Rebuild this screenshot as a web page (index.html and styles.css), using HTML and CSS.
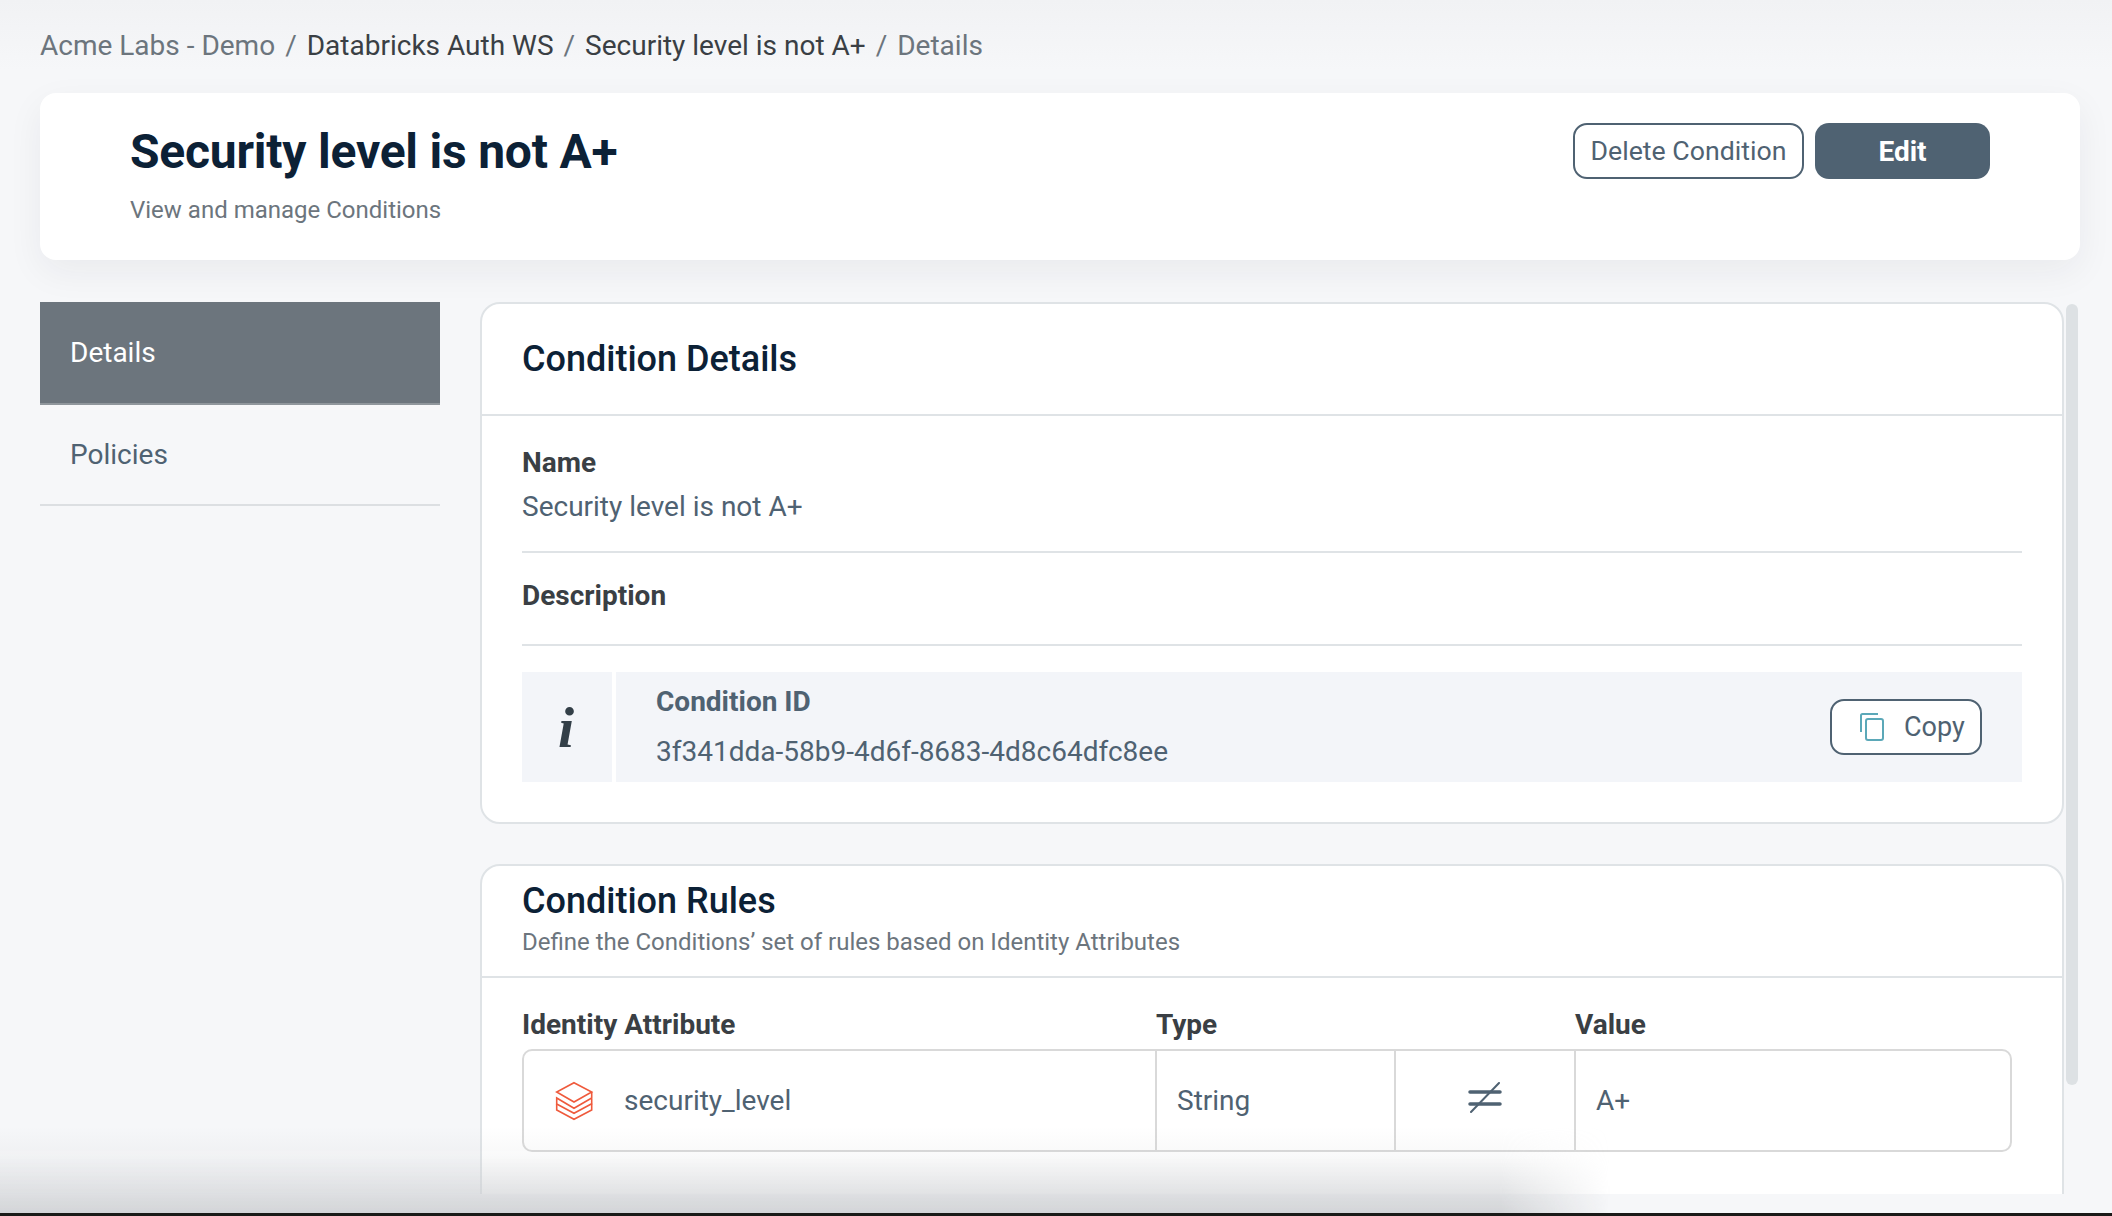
FILE: index.html
```html
<!DOCTYPE html>
<html>
<head>
    <meta charset="utf-8">
    <title>Security level is not A+</title>
    <link rel="stylesheet" href="styles.css">
</head>
<body>

<div class="page">
    <div class="crumbs">
        <span class="crumb-muted">Acme Labs - Demo</span>
        <span class="crumb-sep">/</span>
        <span>Databricks Auth WS</span>
        <span class="crumb-sep">/</span>
        <span>Security level is not A+</span>
        <span class="crumb-sep">/</span>
        <span class="crumb-muted">Details</span>
    </div>

    <div class="top-card">
        <div>
            <h1>Security level is not A+</h1>
            <p class="top-sub">View and manage Conditions</p>
        </div>
        <div class="top-btns">
            <button type="button" class="btn btn-outline btn-delete">Delete Condition</button>
            <button type="button" class="btn btn-solid">Edit</button>
        </div>
    </div>

    <div class="content">
        <div class="side">
            <div class="side-item side-active">Details</div>
            <div class="side-item">Policies</div>
        </div>

        <div class="main">
            <div class="card card-details">
                <div class="card-head">
                    <h2>Condition Details</h2>
                </div>
                <div class="card-body">
                    <div class="field field-name">
                        <div class="label">Name</div>
                        <div class="value">Security level is not A+</div>
                    </div>
                    <div class="field field-desc">
                        <div class="label">Description</div>
                    </div>
                    <div class="info">
                        <div class="info-icon">i</div>
                        <div class="info-main">
                            <div class="info-text">
                                <div class="info-label">Condition ID</div>
                                <div class="info-value">3f341dda-58b9-4d6f-8683-4d8c64dfc8ee</div>
                            </div>
                            <button type="button" class="btn btn-outline btn-copy">
                                <svg width="24" height="28" viewBox="0 0 24 28" fill="none" stroke="#5ba8b8" stroke-width="2">
                                    <path d="M18 1H2.5A1.5 1.5 0 0 0 1 2.500V19"/>
                                    <rect x="6" y="6" width="17" height="21" rx="2"/>
                                </svg>
                                Copy
                            </button>
                        </div>
                    </div>
                </div>
            </div>

            <div class="card card-rules">
                <div class="rules-head">
                    <h2>Condition Rules</h2>
                    <p class="rules-sub">Define the Conditions’ set of rules based on Identity Attributes</p>
                </div>
                <div class="rules-body">
                    <div class="rules-grid rules-labels">
                        <div>Identity Attribute</div>
                        <div>Type</div>
                        <div></div>
                        <div>Value</div>
                    </div>
                    <div class="rules-grid rules-row">
                        <div class="cell cell-attr">
                            <svg width="40" height="42" viewBox="0 0 40 42" fill="none" stroke="#ef5a3c" stroke-width="1.600">
                                <path d="M19 2.700L36.700 12L19 22L1.700 12Z"/>
                                <path d="M36.700 12V18L19 28.300L1.700 18V24L19 33.300L36.700 23.700V18"/>
                                <path d="M1.700 24V30L19 39.300L36.700 30V23.700"/>
                            </svg>
                            security_level
                        </div>
                        <div class="cell">String</div>
                        <div class="cell cell-op">
                            <svg width="34" height="32" viewBox="0 0 34 32" fill="none" stroke="#4f6272">
                                <path d="M2 10H32M2 22H32" stroke-width="3.500" stroke-linecap="round"/>
                                <path d="M31 1L3 30" stroke-width="2" stroke-linecap="round"/>
                            </svg>
                        </div>
                        <div class="cell">A+</div>
                    </div>
                </div>
            </div>
            <div class="scroll-thumb"></div>
        </div>
    </div>
    <div class="bottom-shade"></div>
    <div class="bottom-edge"></div>
</div>

</body>
</html>
```

FILE: styles.css
```css
*{
    padding: 0;
    margin: 0;
    box-sizing: border-box;
}

html,body{
    height: 100%;
    overflow: hidden;
}

body{
    background-color: #f6f7f9;
    font-family: Roboto, "Liberation Sans", sans-serif;
    color: #4f6272;
}

.page{
    position: relative;
    width: 2112px;
    height: 1216px;
    padding: 0 32px 22px 40px;
    display: flex;
    flex-direction: column;
    overflow: hidden;
    background: linear-gradient(#f1f2f4, #f6f7f9 70px);
}

/*面包屑*/
.crumbs{
    height: 93px;
    padding-bottom: 3px;
    display: flex;
    align-items: center;
    gap: 10px;
    font-size: 28px;
    color: #3a3f44;
}

.crumb-muted{
    color: #6c757d;
}

.crumb-sep{
    color: #6c757d;
}

.top-card{
    height: 167px;
    flex-shrink: 0;
    padding: 30px 90px 0 90px;
    display: flex;
    justify-content: space-between;
    align-items: flex-start;
    background-color: #fff;
    border-radius: 16px;
    box-shadow: 0 12px 36px rgba(30,40,50,.06);
}

h1{
    margin-top: 1px;
    font-size: 48px;
    line-height: 56px;
    font-weight: 700;
    letter-spacing: -.22px;
    color: #0c2136;
}

.top-sub{
    margin-top: 15px;
    font-size: 24px;
    line-height: 30px;
    color: #6c757d;
}

.top-btns{
    display: flex;
    gap: 11px;
}

.btn{
    height: 56px;
    border-radius: 14px;
    font-family: inherit;
    font-size: 26.7px;
}

.btn-outline{
    background-color: #fff;
    color: #4f6272;
    border: 2px solid #4f6272;
}

.btn-solid{
    width: 175px;
    background-color: #4f6272;
    color: #fff;
    font-size: 28px;
    font-weight: 700;
    border: 0;
}

.btn-delete{
    width: 231px;
}

.content{
    flex: 1;
    min-height: 0;
    margin-top: 42px;
    display: flex;
    gap: 40px;
}

.side{
    width: 400px;
    flex-shrink: 0;
}

.side-item{
    height: 101px;
    padding-left: 30px;
    display: flex;
    align-items: center;
    font-size: 28px;
    color: #4f6272;
    border-bottom: 2px solid #dcdfe2;
}

.side-active{
    height: 103px;
    background-color: #6c757d;
    color: #fff;
    border-bottom-color: #8f969c;
}

.main{
    position: relative;
    flex: 1;
    padding: 0 16px 0 0;
    overflow: hidden;
}

.scroll-thumb{
    position: absolute;
    top: 2px;
    right: 2px;
    width: 12px;
    height: 781px;
    background-color: #dde1e4;
    border-radius: 6px;
}

.card{
    background-color: #fff;
    border: 2px solid #dfe3e6;
    border-radius: 20px;
}

.card-head{
    height: 112px;
    padding: 0 0 1px 40px;
    display: flex;
    align-items: center;
    border-bottom: 2px solid #dfe3e6;
}

h2{
    font-size: 36px;
    line-height: 44px;
    font-weight: 500;
    color: #0c2136;
}

.card-body{
    padding: 0 40px 40px;
}

.field{
    border-bottom: 2px solid #dfe3e6;
    font-size: 28px;
    line-height: 44px;
}

.field-name{
    padding: 25px 0 22px;
}

.field-desc{
    padding: 21px 0 26px;
}

.label{
    font-weight: 700;
    color: #3a3f44;
}

.value{
    color: #4f6272;
}

.info{
    height: 110px;
    margin-top: 26px;
    display: flex;
    gap: 4px;
}

.info-icon{
    width: 90px;
    padding-right: 2px;
    display: flex;
    align-items: center;
    justify-content: center;
    background-color: #f3f5f9;
    font-family: "Liberation Serif", serif;
    font-weight: 700;
    font-style: italic;
    font-size: 58px;
    color: #333f48;
}

.info-main{
    flex: 1;
    padding: 0 40px;
    display: flex;
    align-items: center;
    justify-content: space-between;
    background-color: #f3f5f9;
}

.info-label{
    font-size: 28px;
    line-height: 40px;
    font-weight: 700;
}

.info-value{
    margin-top: 10px;
    font-size: 28px;
    line-height: 40px;
}

.btn-copy{
    width: 152px;
    padding-left: 28px;
    display: flex;
    align-items: center;
    gap: 20px;
    font-size: 27px;
}

.card-rules{
    margin-top: 40px;
    height: 420px;
}

.rules-head{
    padding: 13px 40px 19px;
    border-bottom: 2px solid #dfe3e6;
}

.rules-sub{
    margin-top: 4px;
    font-size: 24px;
    line-height: 30px;
    color: #6c757d;
}

.rules-body{
    padding: 27px 40px 0;
}

.rules-grid{
    display: grid;
    grid-template-columns: 631px 239px 180px 1fr;
    width: 1490px;
}

.rules-labels{
    height: 44px;
    grid-template-columns: 634px 239px 180px 1fr;
    font-size: 28px;
    line-height: 40px;
    font-weight: 700;
    color: #3a3f44;
}

.rules-row{
    height: 103px;
    border: 2px solid #d9d9d9;
    border-radius: 10px;
    font-size: 28px;
}

.cell{
    padding-left: 20px;
    display: flex;
    align-items: center;
    border-left: 2px solid #d9d9d9;
}

.cell:first-child{
    padding-left: 31px;
    border-left: 0;
}

.cell-attr{
    gap: 29px;
}

.cell-op{
    padding-left: 0;
    justify-content: center;
}

.cell-op svg{
    margin-bottom: 5px;
}

/*底部窗口阴影*/
.bottom-shade{
    position: absolute;
    left: 0;
    right: 0;
    bottom: 0;
    height: 92px;
    background: linear-gradient(rgba(200,202,205,0), rgba(205,207,210,.12) 35%, rgba(205,207,210,.6) 76%, rgba(200,202,205,.8));
    -webkit-mask-image: linear-gradient(90deg, #000 1500px, transparent 1610px);
    mask-image: linear-gradient(90deg, #000 1500px, transparent 1610px);
}

.bottom-edge{
    position: absolute;
    left: 0;
    right: 0;
    bottom: 0;
    height: 3px;
    background-color: #1a1a18;
}
```
